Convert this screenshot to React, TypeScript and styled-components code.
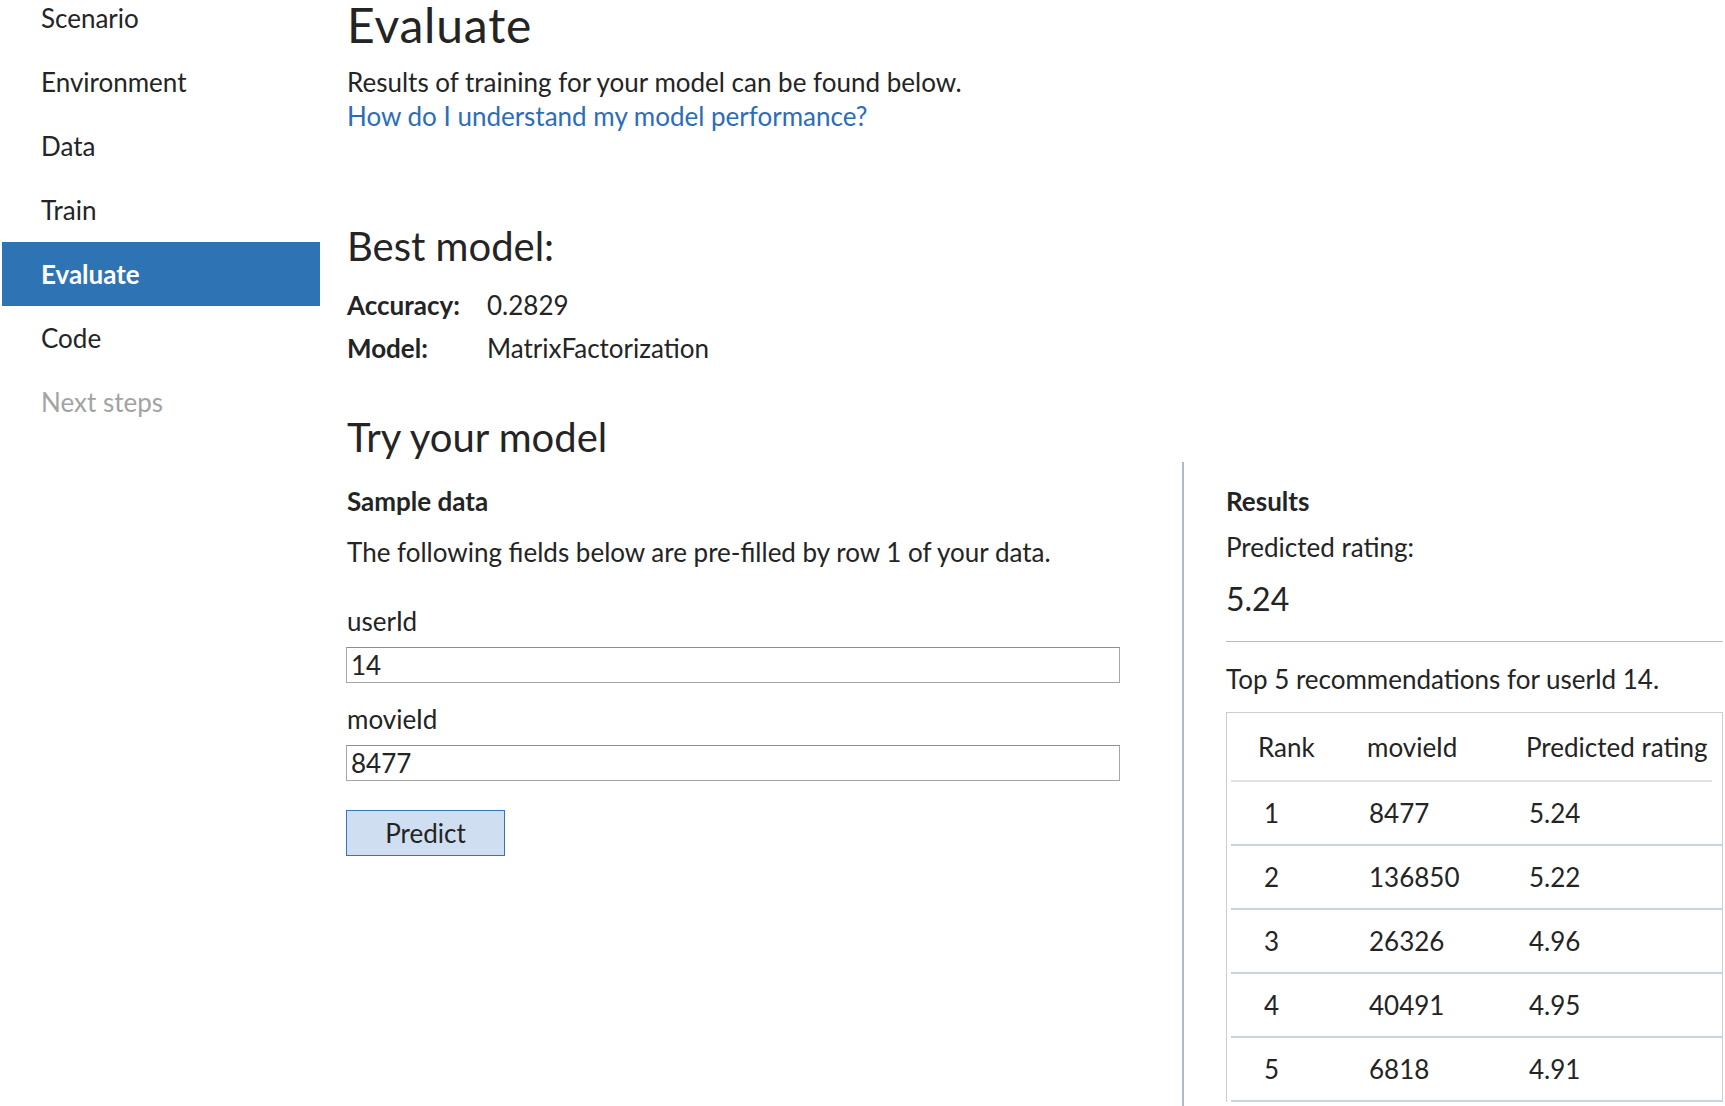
import React from "react";
import styled, { createGlobalStyle } from "styled-components";

const GlobalStyle = createGlobalStyle`
  html, body {
    margin: 0;
    padding: 0;
    background: #ffffff;
    overflow: hidden;
  }
  body {
    font-family: Lato, "Open Sans", sans-serif;
    color: #242424;
  }
  * {
    box-sizing: border-box;
  }
`;

const Page = styled.div`
  display: flex;
  width: 1725px;
  height: 1106px;
  overflow: hidden;
`;

const Sidebar = styled.nav`
  width: 320px;
  flex-shrink: 0;
  padding-left: 2px;
  margin-top: -14px;
  display: flex;
  flex-direction: column;
`;

const NavItem = styled.div<{ $active?: boolean; $muted?: boolean }>`
  height: 64px;
  line-height: 64px;
  padding-left: 39px;
  font-size: 26px;
  font-weight: ${(p) => (p.$active ? 700 : 400)};
  color: ${(p) => (p.$active ? "#ffffff" : p.$muted ? "#a3a3a3" : "#242424")};
  background: ${(p) => (p.$active ? "#2e73b4" : "transparent")};
`;

const Main = styled.main`
  flex: 1;
  margin-left: 27px;
  display: flex;
  flex-direction: column;
`;

const Title = styled.h1`
  margin: 0;
  font-size: 48px;
  line-height: 50px;
  font-weight: 400;
  letter-spacing: 0.8px;
`;

const Text = styled.p<{ $gap?: number }>`
  margin: ${(p) => p.$gap ?? 0}px 0 0;
  font-size: 26px;
  line-height: 32px;
`;

const Link = styled.a`
  display: block;
  margin-top: 2px;
  font-size: 26px;
  line-height: 32px;
  color: #2b6db8;
  text-decoration: none;
`;

const Heading = styled.h2<{ $gap: number }>`
  margin: ${(p) => p.$gap}px 0 0;
  font-size: 40px;
  line-height: 48px;
  font-weight: 400;
`;

const Stats = styled.dl`
  margin: 14px 0 0;
  display: grid;
  grid-template-columns: 140px auto;
  grid-auto-rows: 43px;
  font-size: 26px;
  line-height: 43px;
`;

const StatLabel = styled.dt`
  font-weight: 700;
`;

const StatValue = styled.dd`
  margin: 0;
`;

const TryArea = styled.section`
  margin-top: 1px;
  flex: 1;
  display: grid;
  grid-template-columns: 835px 1fr;
`;

const LeftCol = styled.div`
  padding-top: 23px;
  display: flex;
  flex-direction: column;
`;

const RightCol = styled.div`
  border-left: 2px solid #b3bac6;
  padding: 23px 0 0 42px;
  display: flex;
  flex-direction: column;
`;

const SubHead = styled.div`
  font-size: 26px;
  line-height: 32px;
  font-weight: 700;
`;

const FieldLabel = styled.label<{ $gap: number }>`
  display: block;
  margin-top: ${(p) => p.$gap}px;
  font-size: 26px;
  line-height: 32px;
`;

const Input = styled.input`
  display: block;
  margin-top: 10px;
  width: 774px;
  height: 36px;
  margin-left: -1px;
  border: 1px solid #a6a6a6;
  border-top-color: #8e8e8e;
  padding: 0 4px;
  font-family: inherit;
  font-size: 26px;
  color: #242424;
  outline: none;
`;

const PredictButton = styled.button`
  margin-top: 29px;
  margin-left: -1px;
  width: 159px;
  height: 46px;
  background: #cfdef0;
  border: 1px solid #3574b8;
  font-family: inherit;
  font-size: 26px;
  color: #242424;
  cursor: pointer;
`;

const BigValue = styled.div`
  margin-top: 18px;
  font-size: 32px;
  line-height: 36px;
`;

const Rule = styled.hr`
  margin: 24px 0 0;
  border: 0;
  border-top: 1px solid #bcbcbc;
  width: 497px;
`;

const TableBox = styled.div`
  margin-top: 17px;
  width: 497px;
  border: 1px solid #cdcdcd;
  border-bottom: 0;
  padding: 0 0 0 4px;
`;

const Row = styled.div<{ $head?: boolean }>`
  display: grid;
  grid-template-columns: ${(p) => (p.$head ? "109px 159px 1fr" : "105px 160px 1fr")};
  padding-left: ${(p) => (p.$head ? 27 : 33)}px;
  height: ${(p) => (p.$head ? 69 : 64)}px;
  line-height: ${(p) => (p.$head ? 68 : 63)}px;
  font-size: 26px;
  border-bottom: 2px solid ${(p) => (p.$head ? "#dfe3e8" : "#c6d3e2")};
  margin-right: ${(p) => (p.$head ? 10 : 0)}px;
`;

const Cell = styled.span`
  white-space: nowrap;
`;

const navItems = ["Scenario", "Environment", "Data", "Train", "Evaluate", "Code", "Next steps"];

const recommendations = [
  { rank: 1, movieId: "8477", rating: "5.24" },
  { rank: 2, movieId: "136850", rating: "5.22" },
  { rank: 3, movieId: "26326", rating: "4.96" },
  { rank: 4, movieId: "40491", rating: "4.95" },
  { rank: 5, movieId: "6818", rating: "4.91" },
];

export default function App() {
  return (
    <>
      <GlobalStyle />
      <Page>
        <Sidebar>
          {navItems.map((item) => (
            <NavItem key={item} $active={item === "Evaluate"} $muted={item === "Next steps"}>
              {item}
            </NavItem>
          ))}
        </Sidebar>
        <Main>
          <Title>Evaluate</Title>
          <Text $gap={16}>Results of training for your model can be found below.</Text>
          <Link href="#">How do I understand my model performance?</Link>

          <Heading $gap={90}>Best model:</Heading>
          <Stats>
            <StatLabel>Accuracy:</StatLabel>
            <StatValue>0.2829</StatValue>
            <StatLabel>Model:</StatLabel>
            <StatValue>MatrixFactorization</StatValue>
          </Stats>

          <Heading $gap={43}>Try your model</Heading>
          <TryArea>
            <LeftCol>
              <SubHead>Sample data</SubHead>
              <Text $gap={19}>The following fields below are pre-filled by row 1 of your data.</Text>
              <FieldLabel $gap={37}>userId</FieldLabel>
              <Input defaultValue="14" />
              <FieldLabel $gap={20}>movieId</FieldLabel>
              <Input defaultValue="8477" />
              <div>
                <PredictButton>Predict</PredictButton>
              </div>
            </LeftCol>
            <RightCol>
              <SubHead>Results</SubHead>
              <Text $gap={14}>Predicted rating:</Text>
              <BigValue>5.24</BigValue>
              <Rule />
              <Text $gap={21}>Top 5 recommendations for userId 14.</Text>
              <TableBox>
                <Row $head>
                  <Cell>Rank</Cell>
                  <Cell>movieId</Cell>
                  <Cell>Predicted rating</Cell>
                </Row>
                {recommendations.map((r) => (
                  <Row key={r.rank}>
                    <Cell>{r.rank}</Cell>
                    <Cell>{r.movieId}</Cell>
                    <Cell>{r.rating}</Cell>
                  </Row>
                ))}
              </TableBox>
            </RightCol>
          </TryArea>
        </Main>
      </Page>
    </>
  );
}
